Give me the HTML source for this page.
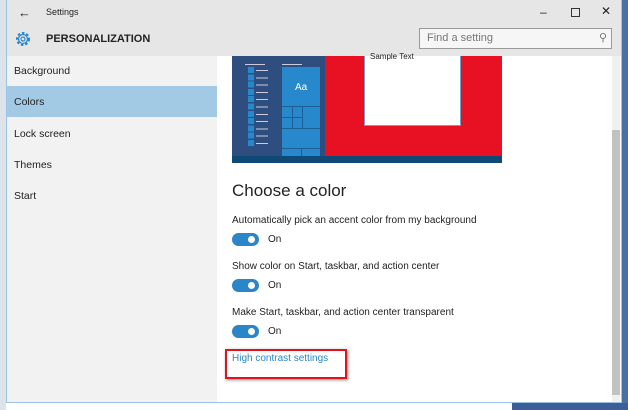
<!DOCTYPE html><html><head><style>
body{margin:0;width:628px;height:410px;position:relative;overflow:hidden;background:#fff;font-family:"Liberation Sans",sans-serif;}
.a{position:absolute}
.t{position:absolute;font-size:10px;color:#222;white-space:nowrap}
.tg{position:absolute;width:27px;height:13px;border-radius:7px;background:#2a86c9}
.tg:after{content:"";position:absolute;right:4px;top:3px;width:7px;height:7px;border-radius:50%;background:#fff}
</style></head><body>
<div class="a" style="left:0;top:0;width:6px;height:410px;background:#dde3ea"></div>
<div class="a" style="left:622px;top:0;width:6px;height:410px;background:#4a6fa5"></div>
<div class="a" style="left:512px;top:403px;width:116px;height:7px;background:#3b5f96"></div>
<div class="a" style="left:6px;top:0;width:616px;height:403px;border:1px solid #9cc3e4;box-sizing:border-box;background:#fff"></div>
<div class="a" style="left:7px;top:0;width:614px;height:56px;background:#e6e6e6"></div>
<div class="t" style="left:18px;top:5px;font-size:13px">←</div>
<div class="t" style="left:46px;top:7px;font-size:9px">Settings</div>
<div class="t" style="left:540px;top:5px;font-size:12px">–</div>
<div class="a" style="left:571px;top:8px;width:7px;height:7px;border:1px solid #333"></div>
<div class="t" style="left:601px;top:4px;font-size:12px">✕</div>
<svg class="a" style="left:14px;top:30px" width="18" height="18" viewBox="0 0 18 18"><circle cx="9" cy="9" r="6" fill="none" stroke="#2a86c9" stroke-width="2" stroke-dasharray="2.5 2"/><circle cx="9" cy="9" r="4.5" fill="none" stroke="#2a86c9" stroke-width="1.2"/><circle cx="9" cy="9" r="2" fill="none" stroke="#2a86c9" stroke-width="1.2"/></svg>
<div class="t" style="left:46px;top:33px;font-size:11px;font-weight:bold">PERSONALIZATION</div>
<div class="a" style="left:419px;top:28px;width:193px;height:21px;border:1px solid #999;box-sizing:border-box;background:#f6f6f6"></div>
<div class="t" style="left:427px;top:32px;font-size:11px;color:#777">Find a setting</div>
<div class="t" style="left:599px;top:31px;font-size:11px;color:#777">⚲</div>
<div class="a" style="left:7px;top:56px;width:210px;height:346px;background:#f2f2f2"></div>
<div class="a" style="left:7px;top:86px;width:210px;height:31px;background:#a3cae4"></div>
<div class="t" style="left:14px;top:65px;font-size:10.5px">Background</div>
<div class="t" style="left:14px;top:96px;font-size:10.5px">Colors</div>
<div class="t" style="left:14px;top:128px;font-size:10.5px">Lock screen</div>
<div class="t" style="left:14px;top:159px;font-size:10.5px">Themes</div>
<div class="t" style="left:14px;top:190px;font-size:10.5px">Start</div>
<div class="a" style="left:612px;top:56px;width:8px;height:346px;background:#f0f0f0"></div>
<div class="a" style="left:612px;top:130px;width:8px;height:265px;background:#c2c2c2"></div>
<div class="a" style="left:232px;top:56px;width:270px;height:107px;background:#e81123"></div>
<div class="a" style="left:232px;top:56px;width:93px;height:100px;background:#2d4e7e"></div>
<div class="a" style="left:232px;top:156px;width:270px;height:7px;background:#0e4a75"></div>
<div class="a" style="left:282px;top:67px;width:38px;height:89px;background:#2789cc"></div>
<div class="a" style="left:282px;top:106px;width:38px;height:1px;background:#1d5f94"></div>
<div class="a" style="left:282px;top:128px;width:38px;height:1px;background:#1d5f94"></div>
<div class="a" style="left:282px;top:148px;width:38px;height:1px;background:#1d5f94"></div>
<div class="a" style="left:292px;top:106px;width:1px;height:22px;background:#1d5f94"></div>
<div class="a" style="left:302px;top:106px;width:1px;height:22px;background:#1d5f94"></div>
<div class="a" style="left:282px;top:117px;width:20px;height:1px;background:#1d5f94"></div>
<div class="a" style="left:301px;top:148px;width:1px;height:8px;background:#1d5f94"></div>
<div class="a" style="left:282px;top:64px;width:20px;height:1px;background:#ccd"></div>
<div class="a" style="left:245px;top:64px;width:20px;height:1px;background:#ccd"></div>
<div class="t" style="left:295px;top:82px;color:#fff;font-size:10px">Aa</div>
<div class="a" style="left:248px;top:67px;width:6px;height:80px;background:repeating-linear-gradient(#2789cc 0 6px,transparent 6px 7.3px)"></div>
<div class="a" style="left:256px;top:70px;width:12px;height:80px;background:repeating-linear-gradient(#ccd 0 1px,transparent 1px 7.3px)"></div>
<div class="a" style="left:364px;top:56px;width:97px;height:70px;background:#fff;border:1px solid #7a9bc0;border-top:0;box-sizing:border-box"></div>
<div class="t" style="left:370px;top:52px;font-size:8px">Sample Text</div>
<div class="t" style="left:232px;top:181px;font-size:17px">Choose a color</div>
<div class="t" style="left:232px;top:215px">Automatically pick an accent color from my background</div>
<div class="tg" style="left:232px;top:233px"></div><div class="t" style="left:268px;top:234px">On</div>
<div class="t" style="left:232px;top:261px">Show color on Start, taskbar, and action center</div>
<div class="tg" style="left:232px;top:279px"></div><div class="t" style="left:268px;top:280px">On</div>
<div class="t" style="left:232px;top:307px">Make Start, taskbar, and action center transparent</div>
<div class="tg" style="left:232px;top:325px"></div><div class="t" style="left:268px;top:326px">On</div>
<div class="t" style="left:232px;top:353px;color:#2a86c9">High contrast settings</div>
<div class="a" style="left:225px;top:349px;width:122px;height:30px;border:2px solid #e0141e;box-sizing:border-box;box-shadow:1px 1px 3px #888"></div>
</body></html>
